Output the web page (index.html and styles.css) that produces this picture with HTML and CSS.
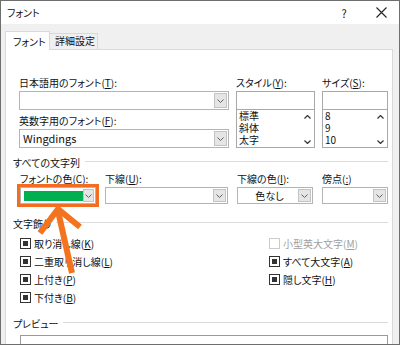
FILE: index.html
```html
<!DOCTYPE html>
<html>
<head>
    <meta charset="utf-8">
    <title>フォント</title>
    <link rel="stylesheet" href="styles.css">
</head>
<body>
<div class="window">
    <div class="titlebar">
        <span class="title">フォント</span>
        <span class="help">?</span>
        <span class="close">
            <svg width="11" height="11" viewBox="0 0 11 11"><path d="M0.5 0.5 L10.5 10.5 M10.5 0.5 L0.5 10.5" stroke="#222" stroke-width="1.1" fill="none"/></svg>
        </span>
    </div>
    <div class="client">
        <div class="tabs">
            <div class="tab active">フォント</div>
            <div class="tab">詳細設定</div>
        </div>
        <div class="panel">
            <div class="font-grid">
                <div class="col">
                    <div class="lbl">日本語用のフォント(<u>T</u>):</div>
                    <div class="combo tall">
                        <span class="val"></span>
                        <span class="dd"><svg width="7" height="4" viewBox="0 0 7 4"><path d="M0.5 0.5 L3.5 3.5 L6.5 0.5" stroke="#606060" fill="none"/></svg></span>
                    </div>
                    <div class="lbl second">英数字用のフォント(<u>F</u>):</div>
                    <div class="combo tall">
                        <span class="val latin">Wingdings</span>
                        <span class="dd"><svg width="7" height="4" viewBox="0 0 7 4"><path d="M0.5 0.5 L3.5 3.5 L6.5 0.5" stroke="#606060" fill="none"/></svg></span>
                    </div>
                </div>
                <div class="col">
                    <div class="lbl">スタイル(<u>Y</u>):</div>
                    <div class="textbox"></div>
                    <div class="listbox">
                        <div class="items">
                            <div>標準</div>
                            <div>斜体</div>
                            <div>太字</div>
                        </div>
                        <div class="scroll">
                            <svg width="7" height="4" viewBox="0 0 7 4"><path d="M0.5 3.5 L3.5 0.5 L6.5 3.5" stroke="#333" stroke-width="1.2" fill="none"/></svg>
                            <svg width="7" height="4" viewBox="0 0 7 4"><path d="M0.5 0.5 L3.5 3.5 L6.5 0.5" stroke="#333" stroke-width="1.2" fill="none"/></svg>
                        </div>
                    </div>
                </div>
                <div class="col">
                    <div class="lbl">サイズ(<u>S</u>):</div>
                    <div class="textbox"></div>
                    <div class="listbox">
                        <div class="items">
                            <div>8</div>
                            <div>9</div>
                            <div>10</div>
                        </div>
                        <div class="scroll">
                            <svg width="7" height="4" viewBox="0 0 7 4"><path d="M0.5 3.5 L3.5 0.5 L6.5 3.5" stroke="#333" stroke-width="1.2" fill="none"/></svg>
                            <svg width="7" height="4" viewBox="0 0 7 4"><path d="M0.5 0.5 L3.5 3.5 L6.5 0.5" stroke="#333" stroke-width="1.2" fill="none"/></svg>
                        </div>
                    </div>
                </div>
            </div>

            <div class="group-title first">すべての文字列</div>
            <div class="all-grid">
                <div class="lbl">フォントの色(<u>C</u>):</div>
                <div class="lbl">下線(<u>U</u>):</div>
                <div class="lbl">下線の色(<u>I</u>):</div>
                <div class="lbl">傍点(<u>:</u>)</div>
                <div class="combo color-pick">
                    <span class="val"><span class="swatch"></span></span>
                    <span class="dd"><svg width="7" height="4" viewBox="0 0 7 4"><path d="M0.5 0.5 L3.5 3.5 L6.5 0.5" stroke="#606060" fill="none"/></svg></span>
                </div>
                <div class="combo">
                    <span class="val"></span>
                    <span class="dd"><svg width="7" height="4" viewBox="0 0 7 4"><path d="M0.5 0.5 L3.5 3.5 L6.5 0.5" stroke="#606060" fill="none"/></svg></span>
                </div>
                <div class="combo">
                    <span class="val center">色なし</span>
                    <span class="dd"><svg width="7" height="4" viewBox="0 0 7 4"><path d="M0.5 0.5 L3.5 3.5 L6.5 0.5" stroke="#606060" fill="none"/></svg></span>
                </div>
                <div class="combo">
                    <span class="val"></span>
                    <span class="dd"><svg width="7" height="4" viewBox="0 0 7 4"><path d="M0.5 0.5 L3.5 3.5 L6.5 0.5" stroke="#606060" fill="none"/></svg></span>
                </div>
            </div>

            <div class="group-title deco">文字飾り</div>
            <div class="effects">
                <div class="effect-col left">
                    <div class="chk"><span class="box mixed"></span><span>取り消し線(<u>K</u>)</span></div>
                    <div class="chk"><span class="box mixed"></span><span>二重取り消し線(<u>L</u>)</span></div>
                    <div class="chk"><span class="box mixed"></span><span>上付き(<u>P</u>)</span></div>
                    <div class="chk"><span class="box mixed"></span><span>下付き(<u>B</u>)</span></div>
                </div>
                <div class="effect-col">
                    <div class="chk disabled"><span class="box"></span><span>小型英大文字(<u>M</u>)</span></div>
                    <div class="chk"><span class="box mixed"></span><span>すべて大文字(<u>A</u>)</span></div>
                    <div class="chk"><span class="box mixed"></span><span>隠し文字(<u>H</u>)</span></div>
                </div>
            </div>

            <div class="group-title preview-title">プレビュー</div>
            <div class="preview"></div>
        </div>
    </div>
</div>

<svg class="callout" width="400" height="345" viewBox="0 0 400 345">
    <polyline points="40,233 58,209 80,227" stroke="#f3731f" stroke-width="6" fill="none"/>
    <line x1="58" y1="211" x2="72" y2="273" stroke="#f3731f" stroke-width="6"/>
</svg>
</body>
</html>
```

FILE: styles.css
```css
body {
    margin: 0;
    position: relative;
    width: 400px;
    height: 345px;
    overflow: hidden;
    font-family: "Noto Sans CJK JP", "Noto Sans", sans-serif;
    font-size: 10px;
    font-feature-settings: "palt";
    text-autospace: no-autospace;
    color: #111;
}

u {
    text-underline-offset: 1px;
}

.window {
    box-sizing: border-box;
    width: 400px;
    height: 345px;
    border: 1px solid #6e6e6e;
    display: flex;
    flex-direction: column;
    overflow: hidden;
}

.titlebar {
    height: 23px;
    flex: none;
    background: #fff;
    display: flex;
    align-items: center;
    padding-left: 6px;
}

.title {
    flex: 1;
}

.help {
    font-size: 11px;
    width: 10px;
    text-align: center;
    margin-right: 27px;
}

.close {
    display: flex;
    margin-right: 12px;
}

.client {
    flex: 1;
    background: #f0f0f0;
    padding: 7px 6px 0 4px;
    display: flex;
    flex-direction: column;
}

.tabs {
    display: flex;
    align-items: flex-end;
}

.tab {
    box-sizing: border-box;
    height: 16px;
    width: 48px;
    border: 1px solid #d9d9d9;
    border-left: none;
    border-bottom: none;
    line-height: 14px;
    padding-left: 5px;
    background: #f0f0f0;
}

.tab.active {
    width: 45px;
    height: 19px;
    margin-bottom: -1px;
    border-left: 1px solid #d9d9d9;
    background: #fff;
    position: relative;
    z-index: 1;
    padding-left: 7px;
    padding-top: 2px;
    line-height: 16px;
}

.panel {
    flex: 1;
    background: #fff;
    border: 1px solid #d9d9d9;
    border-bottom: none;
    padding: 25px 4px 0 7px;
}

.lbl {
    line-height: 16px;
    white-space: nowrap;
}

.lbl.second {
    margin-top: 3px;
}

.font-grid {
    display: grid;
    grid-template-columns: 210px 79px 66px;
    column-gap: 7px;
    margin-left: 6px;
}

.combo {
    box-sizing: border-box;
    height: 17px;
    border: 1px solid #b4b4b4;
    display: flex;
    padding: 1px;
    background: #fff;
}

.combo.tall {
    height: 19px;
}

.combo .val {
    flex: 1;
    padding-left: 2px;
    line-height: 13px;
    display: flex;
    align-items: center;
}

.combo .val.center {
    justify-content: center;
}

.latin {
    font-size: 11px;
}

.dd {
    box-sizing: border-box;
    width: 13px;
    border: 1px solid #c3c3c3;
    background: #e5e5e5;
    display: flex;
    align-items: center;
    justify-content: center;
}

.textbox {
    box-sizing: border-box;
    height: 19px;
    border: 1px solid #a8a8a8;
}

.listbox {
    box-sizing: border-box;
    height: 38px;
    border: 1px solid #a8a8a8;
    border-top: none;
    display: flex;
}

.listbox .items {
    flex: 1;
    padding-left: 2px;
    line-height: 12px;
}

.listbox .scroll {
    width: 14px;
    display: flex;
    flex-direction: column;
    justify-content: space-between;
    align-items: center;
    padding: 5px 0 3px;
}

.group-title {
    display: flex;
    align-items: center;
    gap: 5px;
    line-height: 16px;
    white-space: nowrap;
}

.group-title::after {
    content: "";
    flex: 1;
    height: 1px;
    background: #dcdcdc;
    margin-bottom: 3px;
}

.group-title.first {
    margin-top: 7px;
}

.group-title.deco {
    margin-top: 12px;
}

.group-title.preview-title {
    margin-top: 10px;
}

.all-grid {
    display: grid;
    grid-template-columns: 76px 123px 76px 66px;
    column-gap: 9px;
    margin-left: 7px;
}

.color-pick {
    outline: 3px solid #f26d21;
}

.swatch {
    display: block;
    width: 59px;
    height: 10px;
    background: #00b050;
}

.effects {
    display: flex;
    margin-top: 2px;
    margin-left: 7px;
}

.effect-col {
    display: flex;
    flex-direction: column;
}

.effect-col.left {
    width: 249px;
}

.chk {
    height: 18px;
    display: flex;
    align-items: center;
    gap: 3px;
    white-space: nowrap;
}

.box {
    box-sizing: border-box;
    width: 11px;
    height: 11px;
    border: 1px solid #333;
    background: #fff;
    padding: 2px;
}

.box.mixed::after {
    content: "";
    display: block;
    width: 5px;
    height: 5px;
    background: #333;
}

.chk.disabled {
    color: #a0a0a0;
}

.chk.disabled .box {
    border-color: #cccccc;
}

.preview {
    margin-top: 3px;
    margin-left: 7px;
    height: 30px;
    border: 1px solid #9a9a9a;
}

.callout {
    position: absolute;
    top: 0;
    left: 0;
    pointer-events: none;
}
```
